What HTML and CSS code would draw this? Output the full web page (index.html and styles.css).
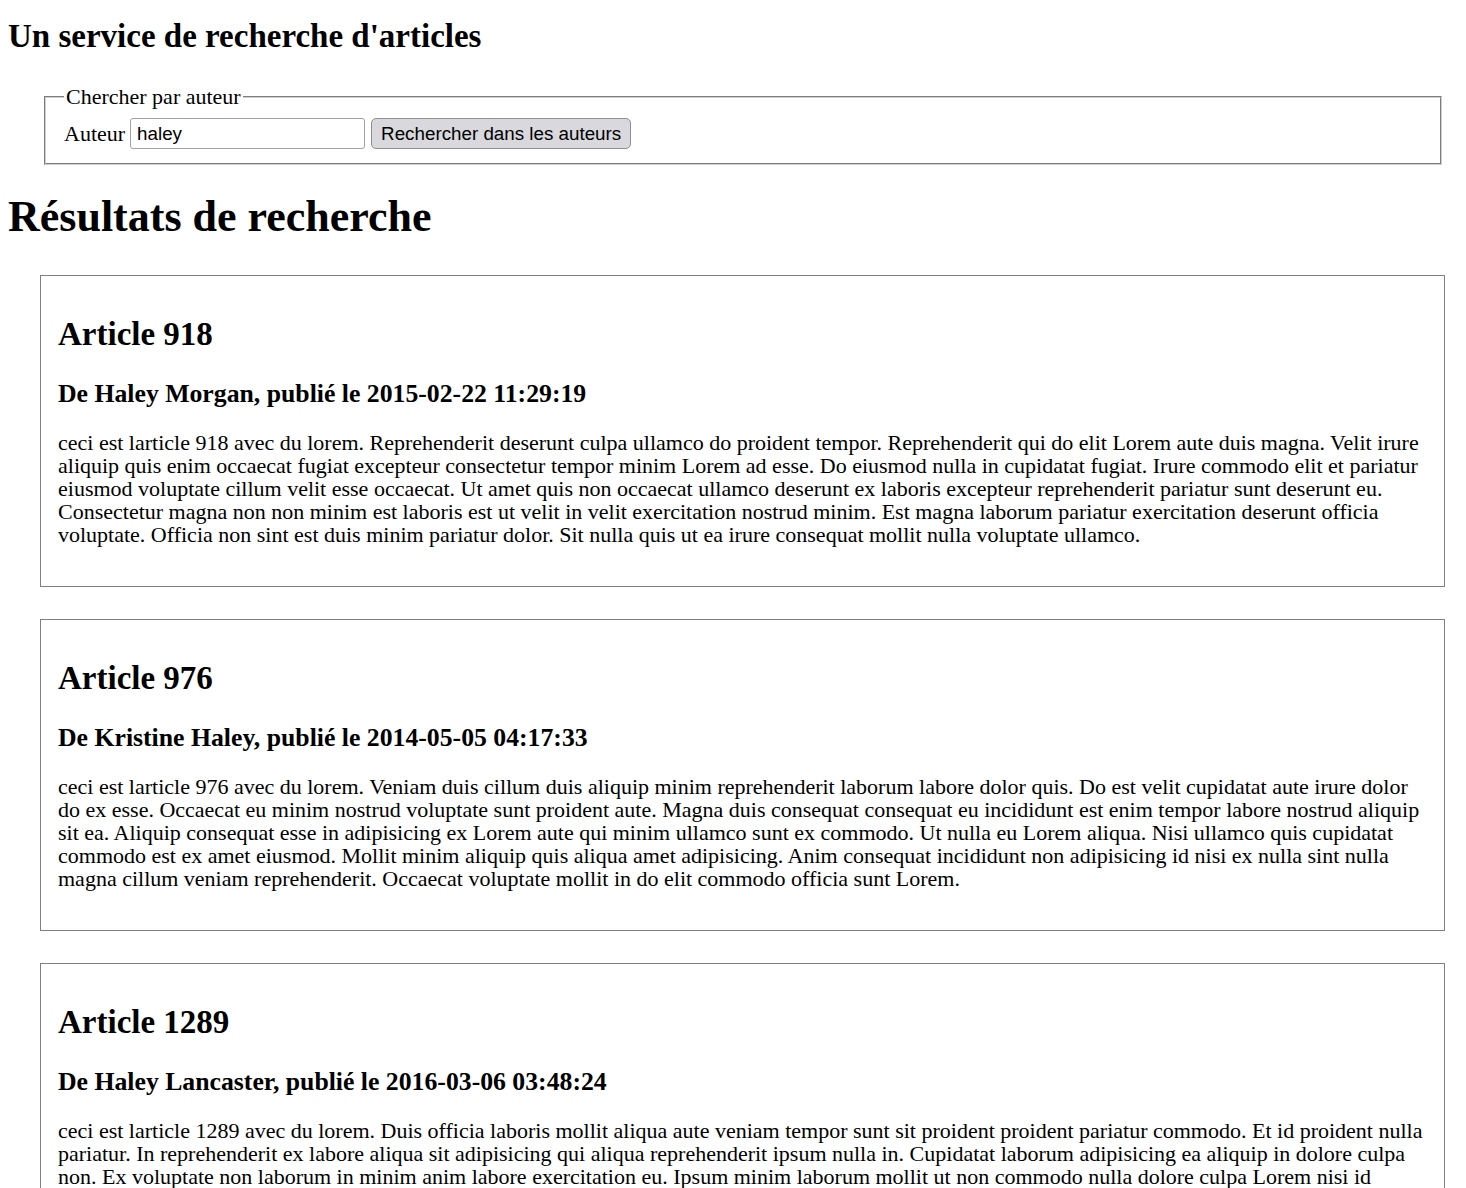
FILE: index.html
```html
<!DOCTYPE html>
<html lang="fr">
<head>
<meta charset="utf-8">
<title>Recherche d'articles</title>
<link rel="stylesheet" href="styles.css">
</head>
<body>
<h2 class="site-title">Un service de recherche d'articles</h2>
<form class="search">
  <fieldset class="search-box">
    <legend class="search-legend">Chercher par auteur</legend>
    <label class="search-label" for="auteur">Auteur</label>
    <input class="search-input" id="auteur" type="text" value="haley">
    <button class="search-button" type="button">Rechercher dans les auteurs</button>
  </fieldset>
</form>
<h1 class="results-title">Résultats de recherche</h1>
<div class="results">
  <article class="card">
    <h2 class="card-title">Article 918</h2>
    <h3 class="card-meta">De Haley Morgan, publié le 2015-02-22 11:29:19</h3>
    <p class="card-body">ceci est larticle 918 avec du lorem. Reprehenderit deserunt culpa ullamco do proident tempor. Reprehenderit qui do elit Lorem aute duis magna. Velit irure aliquip quis enim occaecat fugiat excepteur consectetur tempor minim Lorem ad esse. Do eiusmod nulla in cupidatat fugiat. Irure commodo elit et pariatur eiusmod voluptate cillum velit esse occaecat. Ut amet quis non occaecat ullamco deserunt ex laboris excepteur reprehenderit pariatur sunt deserunt eu. Consectetur magna non non minim est laboris est ut velit in velit exercitation nostrud minim. Est magna laborum pariatur exercitation deserunt officia voluptate. Officia non sint est duis minim pariatur dolor. Sit nulla quis ut ea irure consequat mollit nulla voluptate ullamco.</p>
  </article>
  <article class="card">
    <h2 class="card-title">Article 976</h2>
    <h3 class="card-meta">De Kristine Haley, publié le 2014-05-05 04:17:33</h3>
    <p class="card-body">ceci est larticle 976 avec du lorem. Veniam duis cillum duis aliquip minim reprehenderit laborum labore dolor quis. Do est velit cupidatat aute irure dolor do ex esse. Occaecat eu minim nostrud voluptate sunt proident aute. Magna duis consequat consequat eu incididunt est enim tempor labore nostrud aliquip sit ea. Aliquip consequat esse in adipisicing ex Lorem aute qui minim ullamco sunt ex commodo. Ut nulla eu Lorem aliqua. Nisi ullamco quis cupidatat commodo est ex amet eiusmod. Mollit minim aliquip quis aliqua amet adipisicing. Anim consequat incididunt non adipisicing id nisi ex nulla sint nulla magna cillum veniam reprehenderit. Occaecat voluptate mollit in do elit commodo officia sunt Lorem.</p>
  </article>
  <article class="card">
    <h2 class="card-title">Article 1289</h2>
    <h3 class="card-meta">De Haley Lancaster, publié le 2016-03-06 03:48:24</h3>
    <p class="card-body">ceci est larticle 1289 avec du lorem. Duis officia laboris mollit aliqua aute veniam tempor sunt sit proident proident pariatur commodo. Et id proident nulla pariatur. In reprehenderit ex labore aliqua sit adipisicing qui aliqua reprehenderit ipsum nulla in. Cupidatat laborum adipisicing ea aliquip in dolore culpa non. Ex voluptate non laborum in minim anim labore exercitation eu. Ipsum minim laborum mollit ut non commodo nulla dolore culpa Lorem nisi id voluptate. Labore esse nostrud ad tempor ipsum. Aute minim ex qui ullamco sint esse dolor consequat.</p>
  </article>
</div>
</body>
</html>
```

FILE: styles.css
```css
html, body {
  background: #ffffff;
}

body {
  margin: 0 8px 8px 8px;
  font-family: "Liberation Serif", "Times New Roman", serif;
  font-size: 22px;
  color: #000000;
}

.site-title {
  font-size: 33px;
  font-weight: bold;
  line-height: 36px;
  margin: 18px 0 0 0;
}

.search {
  margin: 0;
}

.search-box {
  margin: 31px 16px 0 36px;
  padding: 10px 20px 14px 18px;
  border: 2px groove #d0d0d0;
  display: flex;
  align-items: center;
  gap: 0;
}

.search-legend {
  padding: 0 2px;
  margin-left: 0;
  font-size: 22px;
  line-height: 23px;
}

.search-label {
  font-size: 22px;
  line-height: 23px;
  margin-right: 5px;
}

.search-input {
  width: 235px;
  height: 31px;
  box-sizing: border-box;
  border: 1px solid #a0a0a6;
  border-radius: 3px;
  padding: 1px 6px;
  margin: 0 6px 0 0;
  font-family: "Liberation Sans", Arial, sans-serif;
  font-size: 18.8px;
  color: #000;
  background: #fff;
}

.search-button {
  height: 31px;
  box-sizing: border-box;
  padding: 0 9px;
  margin: 0;
  border: 1px solid #8e8e93;
  border-radius: 5px;
  background: #d8d8dd;
  font-family: "Liberation Sans", Arial, sans-serif;
  font-size: 18.8px;
  color: #000;
}

.results-title {
  font-size: 44px;
  font-weight: bold;
  line-height: 48px;
  margin: 28px 0 34px 0;
}

.results {
  margin: 0 13px 0 32px;
  display: flex;
  flex-direction: column;
  gap: 32px;
}

.card {
  border: 1px solid #808080;
  padding: 40px 17px 40px 17px;
}

.card-title {
  font-size: 33px;
  font-weight: bold;
  line-height: 36px;
  margin: 0 0 28px 0;
}

.card-meta {
  font-size: 25.74px;
  font-weight: bold;
  line-height: 28px;
  margin: 0 0 23px 0;
}

.card-body {
  margin: 0;
  line-height: 23px;
}
```
